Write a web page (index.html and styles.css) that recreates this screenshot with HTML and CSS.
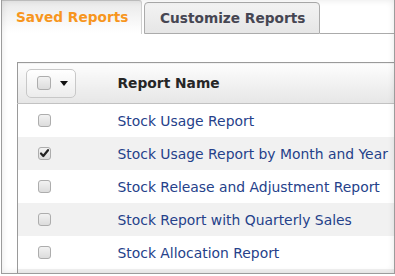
FILE: index.html
```html
<!DOCTYPE html>
<html>
<head>
<meta charset="utf-8">
<link rel="stylesheet" href="styles.css">
</head>
<body>
<div class="frame">
  <div class="tabs">
    <div class="tab tab-active">Saved Reports</div>
    <div class="tab tab-idle">Customize Reports</div>
    <div class="tab-fill"></div>
  </div>
  <div class="panel">
    <table class="grid">
      <thead>
        <tr>
          <th class="col-check">
            <div class="select-btn">
              <span class="cbox"></span>
              <span class="caret"></span>
            </div>
          </th>
          <th class="col-name">Report Name</th>
        </tr>
      </thead>
      <tbody>
        <tr><td class="col-check"><span class="cbox"></span></td><td class="col-name">Stock Usage Report</td></tr>
        <tr class="alt"><td class="col-check"><span class="cbox checked"><svg viewBox="0 0 13 13" width="13" height="13"><path d="M3 6.5 L5.3 9 L10 3.2" fill="none" stroke="#222" stroke-width="2.2" stroke-linecap="round" stroke-linejoin="round"/></svg></span></td><td class="col-name">Stock Usage Report by Month and Year</td></tr>
        <tr><td class="col-check"><span class="cbox"></span></td><td class="col-name">Stock Release and Adjustment Report</td></tr>
        <tr class="alt"><td class="col-check"><span class="cbox"></span></td><td class="col-name">Stock Report with Quarterly Sales</td></tr>
        <tr><td class="col-check"><span class="cbox"></span></td><td class="col-name">Stock Allocation Report</td></tr>
        <tr class="foot"><td colspan="2"></td></tr>
      </tbody>
    </table>
  </div>
</div>
</body>
</html>
```
FILE: styles.css
```css
body {
  margin: 0;
  background: #fff;
  font-family: "DejaVu Sans", Verdana, sans-serif;
}

.frame {
  margin-left: 1px;
  width: 394px;
  height: 274px;
  box-sizing: border-box;
  border: 1px solid #9c9c9c;
  border-top: none;
  position: relative;
  overflow: hidden;
  background: #fff;
}

.frame::after {
  content: "";
  position: absolute;
  inset: 0;
  pointer-events: none;
  box-shadow: inset 0 0 7px rgba(0, 0, 0, 0.10);
}

.tabs {
  display: flex;
  height: 34px;
}

.tab {
  box-sizing: border-box;
  font-weight: bold;
  font-size: 13.7px;
  display: flex;
  align-items: center;
}

.tab-active {
  width: 140px;
  height: 34px;
  padding-left: 14px;
  padding-bottom: 1px;
  color: #f7961e;
  border-top: 1px solid #c4c4c4;
  border-right: 1px solid #d0d0d0;
  border-top-right-radius: 3px;
  background: linear-gradient(#e9e9e9, #fdfdfd 85%, #fff);
}

.tab-idle {
  margin-left: 2px;
  margin-top: 2px;
  width: 176px;
  height: 32px;
  padding-left: 15px;
  color: #464652;
  border: 1px solid #ababab;
  border-radius: 4px 4px 0 0;
  background: linear-gradient(#f3f3f3, #e6e6e6);
}

.tab-fill {
  flex: 1;
  border-bottom: 1px solid #ababab;
}

.panel {
  padding: 28px 0 0 15px;
}

.grid {
  border-collapse: collapse;
  width: 420px;
  border-left: 1px solid #9a9a9a;
  border-top: 1px solid #9a9a9a;
}

.grid th {
  height: 40px;
  padding: 0;
  text-align: left;
  border-bottom: 1px solid #c2c2c2;
  background: linear-gradient(#fdfdfd, #e6e6e6);
  font-size: 13.8px;
  font-weight: bold;
  color: #262626;
}

.grid td {
  height: 33px;
  padding: 0;
  font-size: 13.9px;
  color: #25418a;
  background: #fff;
}

.grid tr.alt td {
  background: #f1f1f1;
}

.grid tr.foot td {
  height: 4px;
  background: #f1f1f1;
}

.col-check {
  width: 90px;
  box-sizing: border-box;
}

td.col-check {
  padding-left: 20px !important;
  line-height: 0;
}

th.col-check {
  padding-left: 8px !important;
}

.col-name {
  padding-left: 10px !important;
  white-space: nowrap;
}

.select-btn {
  box-sizing: border-box;
  width: 50px;
  height: 29px;
  border: 1px solid #c8c8c8;
  border-radius: 5px;
  background: linear-gradient(#ffffff, #ececec);
  display: flex;
  align-items: center;
  padding-left: 10px;
}

.cbox {
  display: inline-block;
  box-sizing: border-box;
  width: 13px;
  height: 13px;
  border: 1px solid #adadad;
  border-radius: 3px;
  background: linear-gradient(#f2f2f2, #dcdcdc);
  vertical-align: middle;
  position: relative;
}

.select-btn .cbox {
  width: 14px;
  height: 14px;
}

.cbox svg {
  position: absolute;
  left: -1px;
  top: -1px;
}

.caret {
  margin-left: 9px;
  width: 0;
  height: 0;
  border-left: 4px solid transparent;
  border-right: 4px solid transparent;
  border-top: 5px solid #111;
}
```
